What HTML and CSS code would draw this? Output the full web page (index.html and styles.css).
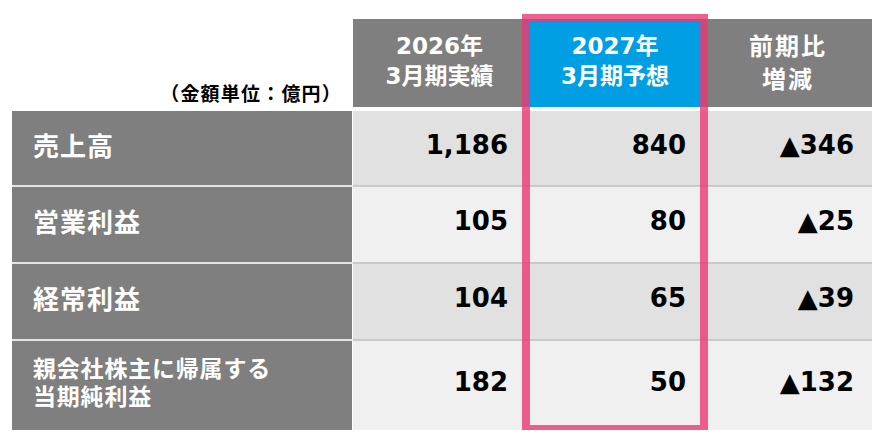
FILE: index.html
```html
<!DOCTYPE html>
<html lang="ja">
<head>
<meta charset="utf-8">
<link rel="stylesheet" href="styles.css">
</head>
<body>
<div class="page">
  <div class="table">
    <div class="unit">（金額単位：億円）</div>
    <div class="head">2026年<br>3月期実績</div>
    <div class="head blue">2027年<br>3月期予想</div>
    <div class="head cjk">前期比<br>増減</div>

    <div class="label">売上高</div>
    <div class="num odd">1,186</div>
    <div class="num odd">840</div>
    <div class="num odd">▲346</div>

    <div class="label">営業利益</div>
    <div class="num even">105</div>
    <div class="num even">80</div>
    <div class="num even">▲25</div>

    <div class="label">経常利益</div>
    <div class="num odd">104</div>
    <div class="num odd">65</div>
    <div class="num odd">▲39</div>

    <div class="label small last"><span class="line">親会社株主に帰属する</span><span class="line">当期純利益</span></div>
    <div class="num even last">182</div>
    <div class="num even last">50</div>
    <div class="num even last">▲132</div>

    <div class="highlight"></div>
  </div>
</div>
</body>
</html>
```

FILE: styles.css
```css
html, body {
  margin: 0;
  padding: 0;
  background: #ffffff;
}

.page {
  padding: 19px 0 0 12px;
}

.table {
  position: relative;
  display: grid;
  grid-template-columns: 341px 173px 178px 168px;
  grid-template-rows: 92px 76px 77px 77px 89px;
  width: 860px;
  font-family: "DejaVu Sans", "Noto Sans CJK JP", sans-serif;
  font-weight: bold;
}

.unit {
  display: flex;
  align-items: flex-end;
  justify-content: flex-end;
  height: 88px;
  padding: 0 11px 2px 0;
  box-sizing: border-box;
  font-family: "Noto Sans CJK JP", sans-serif;
  font-size: 19px;
  letter-spacing: 1.2px;
  line-height: 24px;
  color: #000000;
}

.head {
  display: flex;
  align-items: center;
  justify-content: center;
  text-align: center;
  height: 88px;
  padding-bottom: 5px;
  box-sizing: border-box;
  background: #7f7f7f;
  color: #ffffff;
  font-size: 23px;
  line-height: 30px;
}

.head.cjk {
  font-family: "Noto Sans CJK JP", sans-serif;
  font-size: 24px;
  letter-spacing: 2px;
  line-height: 33px;
}

.head.blue {
  background: #009fe3;
}

.label {
  display: flex;
  flex-direction: column;
  justify-content: center;
  padding: 0 0 7px 21px;
  box-sizing: border-box;
  background: #7f7f7f;
  color: #ffffff;
  border-right: 1px solid #ffffff;
  border-bottom: 2px solid #e4e4e4;
  font-family: "Noto Sans CJK JP", sans-serif;
  font-size: 26px;
  letter-spacing: 1px;
  line-height: 30px;
}

.label.small {
  font-size: 23px;
  letter-spacing: 0.8px;
  line-height: 28px;
  padding-bottom: 9px;
}

.line {
  display: block;
}

.num {
  display: flex;
  align-items: center;
  justify-content: flex-end;
  padding: 0 18px 7px 0;
  box-sizing: border-box;
  border-bottom: 2px solid #c9c9c9;
  color: #000000;
  font-size: 26px;
  line-height: 30px;
}

.num.odd {
  background: #e1e1e1;
}

.num.even {
  background: #f0f0f0;
}

.last {
  border-bottom: none;
}

.highlight {
  position: absolute;
  left: 510px;
  top: -5px;
  width: 186px;
  height: 419px;
  box-sizing: border-box;
  border: 8px solid rgba(236, 56, 115, 0.8);
  pointer-events: none;
}
```
